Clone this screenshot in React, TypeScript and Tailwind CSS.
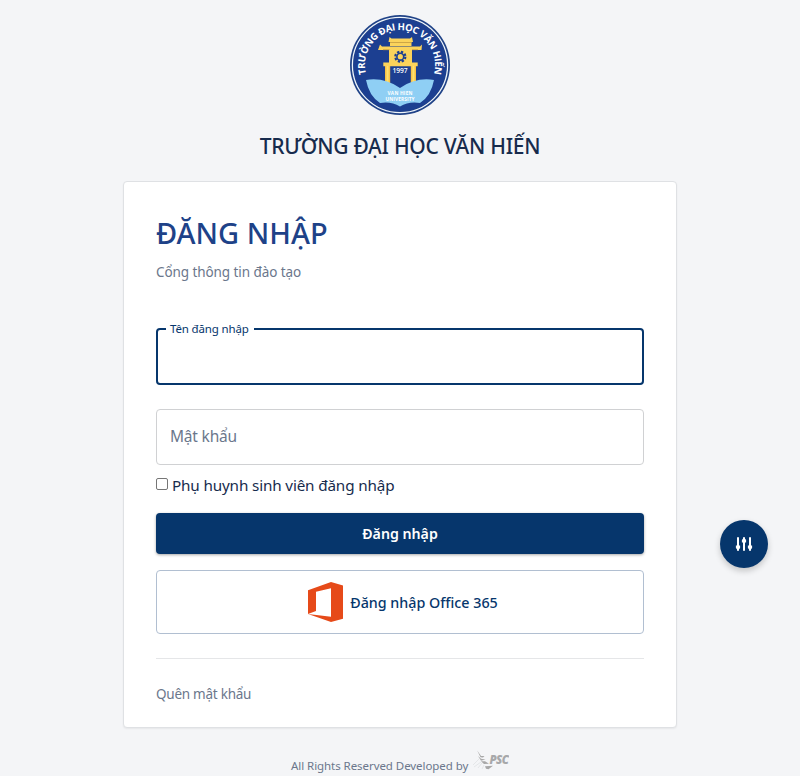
function SchoolLogo() {
  return (
    <svg className="block h-[100px] w-[100px] shrink-0" viewBox="0 0 100 100" aria-hidden="true">
      <defs>
        <path id="crest-arc" d="M15.8 57.5 A35 35 0 1 1 84.2 57.5" />
        <linearGradient id="gate" x1="0" x2="1" y1="0" y2="0">
          <stop offset="0" stopColor="#f9b938" />
          <stop offset="0.5" stopColor="#fde272" />
          <stop offset="1" stopColor="#f9b938" />
        </linearGradient>
      </defs>
      <circle cx="50" cy="50" r="50" fill="#1f4287" />
      <circle cx="50" cy="50" r="47.6" fill="none" stroke="#eef4fb" strokeWidth="1.3" />
      <circle cx="50" cy="50" r="46.4" fill="#1c3f91" />
      <text fill="#fff" fontSize="9.6" fontWeight="700" letterSpacing="-0.35" fontFamily='"Open Sans", "Noto Sans", sans-serif'>
        <textPath href="#crest-arc" startOffset="50%" textAnchor="middle">
          TRƯỜNG ĐẠI HỌC VĂN HIẾN
        </textPath>
      </text>
      <g fill="#fbd35b">
        <path d="M39.5 22 L41.5 23.5 H60 L62 22 L63 27 H38.5 Z" />
        <path d="M40 27 H61.5 V31 H40 Z" />
        <path d="M30 29.5 L32 31.5 H70 L72 29.5 L71.5 35 H28 Z" />
        <path d="M39 34 H62 V49 H39 Z" />
        <path d="M33.3 47.5 H67.7 V51.3 H33.3 Z" />
      </g>
      <path d="M35 51 H40.2 V74 H35 Z" fill="url(#gate)" />
      <path d="M60.8 51 H66 V74 H60.8 Z" fill="url(#gate)" />
      <path d="M40 27.5 H61.5 M33 34.7 H39.5 M62 34.7 H68" stroke="#c39b40" strokeWidth="0.8" />
      <circle cx="50.3" cy="41.7" r="3.4" fill="none" stroke="#1c3f91" strokeWidth="1.6" />
      <circle cx="50.3" cy="41.7" r="5" fill="none" stroke="#1c3f91" strokeWidth="2.2" strokeDasharray="2.3 1.63" />
      <path d="M16 65 Q34 62 50 73 Q66 62 84 65 Q81 81 70 88 Q59 86 50 91.5 Q41 86 30 88 Q19 81 16 65 Z" fill="#8fcff4" />
      <g fill="#fff" textAnchor="middle" fontFamily='"Open Sans", "Noto Sans", sans-serif'>
        <text x="50" y="57.6" fontSize="6.7" fontWeight="600" textLength="15">1997</text>
        <text x="50" y="80.3" fontSize="4.8" fontWeight="700" textLength="25">VAN HIEN</text>
        <text x="50" y="86" fontSize="4.8" fontWeight="700" textLength="29">UNIVERSITY</text>
      </g>
    </svg>
  );
}

function OfficeIcon() {
  return (
    <svg className="block h-[40px] w-[35px]" viewBox="0 0 35 40" aria-hidden="true">
      <path
        fillRule="evenodd"
        fill="#e64a19"
        d="M0 8.2 L23 0 L35 3.6 V36.7 L23 40 L0 32 L23 34.8 V6.2 L8 9.8 V29 L0 32 Z"
      />
    </svg>
  );
}

function SlidersIcon() {
  return (
    <svg className="h-4 w-[18px]" viewBox="0 0 18 16" fill="#fff" aria-hidden="true">
      <rect x="2" y="1" width="2" height="14" rx="1" />
      <path d="M0.9 9.6 H5.1 V12 L3 14.5 L0.9 12 Z" />
      <rect x="8" y="1" width="2" height="14" rx="1" />
      <path d="M6.9 6.4 H11.1 V4 L9 1.5 L6.9 4 Z" />
      <rect x="14" y="1" width="2" height="14" rx="1" />
      <path d="M12.9 9.6 H17.1 V12 L15 14.5 L12.9 12 Z" />
    </svg>
  );
}

function PscLogo() {
  return (
    <svg className="block h-5 w-9" viewBox="0 0 36 20" aria-hidden="true">
      <path d="M6 9 L0 15 M8 12 L1 17 M9 13 L5 18 M11 15 L9 19" stroke="#e4e6e8" strokeWidth="1" />
      <path d="M4.2 0.5 L7 4.5 L8 6 H11.5 L10 7.5 L7.5 7.3 Z M5 6 L8 8.7 L12.5 9.5 L8 10.8 Z M8 11.3 H12 L16 13.7 L11 14 Z M12 16.2 L20 15.8 L15.5 19.3 L13 18.7 Z" fill="#a8a8a8" />
      <text x="16.5" y="14.2" fill="#a7a8aa" fontSize="11.5" fontWeight="800" fontStyle="italic" textLength="19.5" lengthAdjust="spacing" fontFamily='"Open Sans", sans-serif'>PSC</text>
    </svg>
  );
}

export default function App() {
  return (
    <div className="relative flex h-[776px] w-full flex-col items-center overflow-hidden bg-[#f4f5f7] pt-[15px] font-['Noto_Sans','Open_Sans',sans-serif] text-[#172b4d]">
      <SchoolLogo />
      <h2 className="mt-[15px] h-8 shrink-0 text-[21px] leading-8 font-medium tracking-[-0.27px] whitespace-nowrap">TRƯỜNG ĐẠI HỌC VĂN HIẾN</h2>

      <main className="mt-[19px] flex h-[547px] w-[554px] shrink-0 flex-col rounded-[4px] border border-[#dfe1e4] bg-white px-8 shadow-[0_1px_2px_rgba(0,0,0,0.06)]">
        <h1 className="mt-[31px] h-10 text-[29px] leading-10 font-medium whitespace-nowrap text-[#1e4288]">ĐĂNG NHẬP</h1>
        <p className="mt-[9px] h-5 text-[13.5px] leading-5 tracking-[-0.08px] whitespace-nowrap text-[#6b778c]">Cổng thông tin đào tạo</p>

        <form className="mt-[41px] flex flex-col">
          <fieldset className="h-[62px] rounded-[4px] border-2 border-[#06366c] pl-2">
            <legend className="h-[12px] w-[88px] pl-[4px] text-[11.5px] leading-[12px] tracking-[-0.15px] whitespace-nowrap text-[#06366c]">Tên đăng nhập</legend>
          </fieldset>
          <div className="mt-6 flex h-14 items-center rounded-[4px] border border-[#d0d1d3] px-[13px] text-[15.5px] tracking-[-0.2px] whitespace-nowrap text-[#6b778c]">
            <span>Mật khẩu</span>
          </div>
          <label className="mt-[8px] flex h-6 items-center gap-[4px] text-[15.25px] leading-6 tracking-[-0.15px] whitespace-nowrap">
            <span className="mb-[3px] h-[12px] w-[12px] rounded-[2px] border border-[#767676] bg-white" />
            <span>Phụ huynh sinh viên đăng nhập</span>
          </label>
          <button type="button" className="mt-[16px] flex h-[41px] items-center justify-center rounded-[4px] bg-[#06366c] text-[14.2px] font-semibold whitespace-nowrap text-white shadow-[0_1px_3px_rgba(0,0,0,0.35)]">
            <span>Đăng nhập</span>
          </button>
          <button type="button" className="mt-[16px] flex h-16 items-center justify-center gap-[7px] rounded-[4px] border border-[#b1bfd1] pl-[6px] text-[14.3px] font-medium whitespace-nowrap text-[#06366c]">
            <OfficeIcon />
            <span className="pt-[2px]">Đăng nhập Office 365</span>
          </button>
        </form>
        <hr className="mt-[24px] border-[#e5e6e8]" />
        <a className="mt-[25px] h-5 text-[13.5px] leading-5 tracking-[-0.25px] whitespace-nowrap text-[#6b778c]">Quên mật khẩu</a>
      </main>

      <footer className="mt-[22px] flex w-[218px] shrink-0 items-start justify-between text-[11.5px] leading-[31px] tracking-[-0.06px] whitespace-nowrap text-[#6b778c]">
        <span>All Rights Reserved Developed by</span>
        <PscLogo />
      </footer>

      <button type="button" aria-label="Tùy chỉnh" className="absolute top-[520px] left-[720px] flex h-12 w-12 items-center justify-center rounded-full bg-[#06366c] shadow-[0_3px_6px_rgba(0,0,0,0.2)]">
        <SlidersIcon />
      </button>
    </div>
  );
}
